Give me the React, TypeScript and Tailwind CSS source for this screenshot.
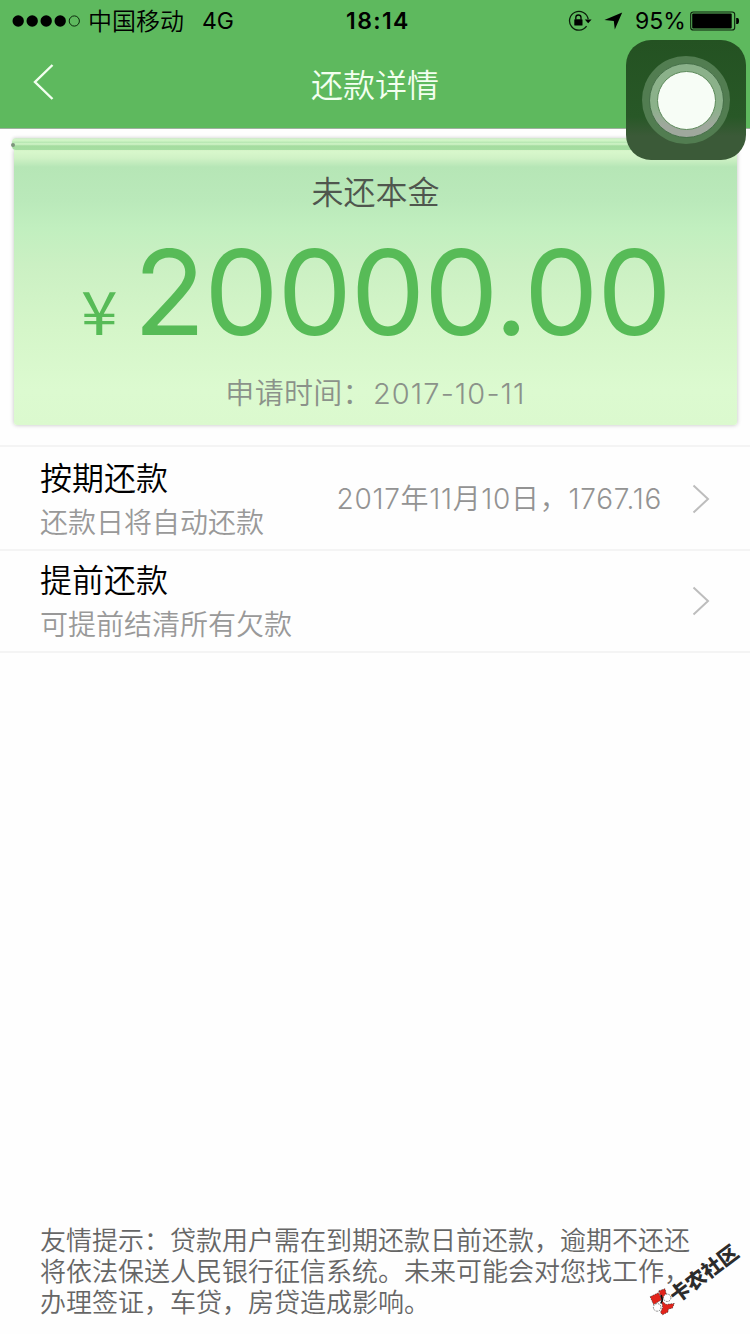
import React from "react";

interface RepayOption {
  title: string;
  hint: string;
  value?: string;
}

const options: RepayOption[] = [
  { title: "按期还款", hint: "还款日将自动还款", value: "2017年11月10日，1767.16" },
  { title: "提前还款", hint: "可提前结清所有欠款" },
];

const notice = [
  "友情提示：贷款用户需在到期还款日前还款，逾期不还还",
  "将依法保送人民银行征信系统。未来可能会对您找工作，",
  "办理签证，车贷，房贷造成影响。",
];

function SignalDots() {
  return (
    <svg width="70" height="14" viewBox="0 0 70 14" className="shrink-0">
      {[6.2, 20.2, 34.2, 48.2].map((x) => (
        <circle key={x} cx={x} cy="7" r="5.7" fill="#000" />
      ))}
      <circle cx="62.3" cy="7" r="5.1" fill="none" stroke="#0b2a0b" strokeWidth="1" />
    </svg>
  );
}

function RotationLock() {
  return (
    <svg width="24" height="22" viewBox="0 0 24 22" className="shrink-0">
      <path d="M18.6 16.2A9.4 9.4 0 1 1 20.2 9.2" fill="none" stroke="#0a1f0a" strokeWidth="1.3" />
      <path d="M16.8 9.4h6.8l-3.4 3.8z" fill="#000" />
      <rect x="6.3" y="9.3" width="8.2" height="6.2" rx="0.6" fill="#000" />
      <path d="M7.8 9.5V7.6a2.6 2.6 0 0 1 5.2 0v1.9" fill="none" stroke="#000" strokeWidth="1.3" />
    </svg>
  );
}

function LocationArrow() {
  return (
    <svg width="19" height="19" viewBox="0 0 19 19" className="shrink-0">
      <path d="M18.2 0.4L10.8 17.6L9.8 8.9L0.4 7.9z" fill="#000" />
    </svg>
  );
}

function Battery() {
  return (
    <svg width="50" height="20" viewBox="0 0 50 20" className="shrink-0">
      <rect x="0.7" y="1" width="44" height="18" rx="2.6" fill="none" stroke="#0b1f0b" strokeWidth="1.1" />
      <rect x="2.2" y="2.6" width="39.5" height="14.8" rx="1" fill="#000" />
      <path d="M46.2 7h1.2q1.6 0 1.6 3t-1.6 3h-1.2z" fill="#000" />
    </svg>
  );
}

function StatusBar() {
  return (
    <div className="flex h-10 items-center pt-px text-black">
      <div className="flex w-[346px] items-center pl-3">
        <SignalDots />
        <span className="mt-[2px] ml-[6px] text-[24px] leading-10 font-[350]">中国移动</span>
        <span className="ml-[18px] text-[23px] leading-10">4G</span>
      </div>
      <span className="w-[222px] text-[23px] leading-10 font-semibold tracking-[1.4px]">18:14</span>
      <RotationLock />
      <span className="mt-px ml-3 flex">
        <LocationArrow />
      </span>
      <span className="ml-3 w-[55px] text-[23px] leading-10">95%</span>
      <Battery />
    </div>
  );
}

function AssistiveTouch() {
  return (
    <div className="absolute top-10 left-[626px] z-10 flex size-[120px] items-center justify-center rounded-[25px] bg-[linear-gradient(180deg,#245222_0%,#285827_64%,#3b5a38_80%,#3b5a38_100%)]">
      <div className="flex size-[88px] items-center justify-center rounded-full bg-[#527d51]">
        <div className="flex size-[75px] items-center justify-center rounded-full border border-[#47704a] bg-[linear-gradient(180deg,#8bb18a_60%,#9fa89d_85%)]">
          <div className="size-[59px] rounded-full border border-[#5d8a5b] bg-[#f7fdf6]" />
        </div>
      </div>
    </div>
  );
}

function AmountCard() {
  return (
    <section className="mx-3 mt-[9px] flex h-[287px] flex-col">
      {/* slot that the receipt slides out of */}
      <div className="relative h-[12px] shrink-0 rounded-l-[4px] bg-[linear-gradient(180deg,#cfe8cb_0%,#d3f7c8_18%,#b8e8b3_38%,#d3f5c9_50%,#a4dc9f_66%,#a6dea2_100%)] shadow-[0_-1px_3px_rgba(0,0,0,0.12)]">
        <span className="absolute top-[5px] -left-px h-[4px] w-[4px] rounded-full bg-[#7d947c]" />
      </div>
      <div className="mr-px ml-[2px] flex flex-1 flex-col items-center rounded-b-[3px] bg-[linear-gradient(180deg,#daf9cd_0px,#d0f2c6_8px,#b6e6b6_17px,#bae9ba_50px,#c1efbf_78px,#cbf0c3_115px,#d5f6c9_180px,#dcfad0_240px,#dbf9ce_276px)] shadow-[0_0_4px_rgba(0,0,0,0.25)]">
        <h2 className="mt-[20px] text-[32px] leading-[46px] font-[350] text-[#4f564e]">未还本金</h2>
        <div className="mt-[11px] flex h-[130px] w-[590px] items-baseline text-[#57bb57]">
          <span className="w-[53px] shrink-0 origin-left scale-x-110 font-['Noto_Sans_CJK_SC',sans-serif] text-[60px] leading-none">
            ¥
          </span>
          <span className="text-[118px] leading-[130px] tracking-[-1.2px]">20000.00</span>
        </div>
        <p className="mt-[17px] flex text-[29px] leading-[40px] font-[350] text-[#8b928a]">
          <span className="mr-px tracking-[0.3px]">申请时间：</span>
          <span className="tracking-[1.1px]">2017-10-11</span>
        </p>
      </div>
    </section>
  );
}

function Chevron() {
  return (
    <svg width="18" height="30" viewBox="0 0 18 30" className="shrink-0">
      <path d="M1.5 1.5L16 15L1.5 28.5" fill="none" stroke="#bdbdbd" strokeWidth="2" />
    </svg>
  );
}

function OptionRow({ title, hint, value }: RepayOption) {
  return (
    <li className="flex h-[102px] items-center border-b-2 border-[#f4f4f4] px-10 first:h-[104px] first:pt-[2px]">
      <div className="flex-1">
        <div className="text-[32px] leading-[48px] font-[350] text-black">{title}</div>
        <div className="text-[28px] leading-[40px] font-[350] text-[#999]">{hint}</div>
      </div>
      {value && <div className="mr-[30px] text-[28px] font-[350] tracking-[0.7px] text-[#939393]">{value}</div>}
      <Chevron />
    </li>
  );
}

function CornerMark() {
  return (
    <div className="absolute top-[1242px] left-[649px] h-[76px] w-[100px]">
      <svg width="28" height="30" viewBox="0 0 28 30" className="absolute top-[45px] left-0">
        <g stroke="#222" strokeWidth="0.6" strokeDasharray="1.6 1" strokeLinejoin="round">
          <path d="M1.2 9.8L9.4 5.8L13 12.5L4.6 17.6z" fill="#e2231a" />
          <path d="M9.8 3.9L16 1.8L17.3 7.5L12.8 12z" fill="#e2231a" />
          <path d="M12.6 13.6L17 17.5L25.3 16.5L23.3 21.2L19.3 21.9L19 25L13.5 27.8L11.5 25.4L13.7 20.5z" fill="#e2231a" />
          <circle cx="18.2" cy="10.8" r="3.7" fill="#fff" />
          <circle cx="8.2" cy="20.4" r="3.8" fill="#fff" />
        </g>
        <path d="M12.2 8l1.2 5 -1.6 3.5" fill="none" stroke="#111" strokeWidth="1.6" />
      </svg>
      <span className="absolute top-[22px] left-[15px] -rotate-[37deg] text-[20px] leading-none font-black whitespace-nowrap text-[#2c2c2c]">
        卡农社区
      </span>
    </div>
  );
}

export default function App() {
  return (
    <div
      lang="zh-CN"
      className="relative flex h-[1334px] w-[750px] flex-col overflow-hidden bg-[#fefefe] font-['Inter','Noto_Sans_CJK_SC',sans-serif]"
    >
      <header className="h-[129px] shrink-0 border-b border-[#9fb09f] bg-[#5eb95e]">
        <StatusBar />
        <div className="flex h-[88px] items-center pl-8">
          <svg width="24" height="40" viewBox="0 0 24 40" className="mb-1 shrink-0">
            <path d="M20.5 3L3 20L20.5 37" fill="none" stroke="#f3fff0" strokeWidth="2.4" />
          </svg>
          <h1 className="mt-1 ml-[255px] text-[32px] leading-[48px] font-[350] text-[#f3fff0]">还款详情</h1>
        </div>
      </header>

      <AssistiveTouch />
      <AmountCard />

      <ul className="mt-[20px] border-t-2 border-[#f4f4f4]">
        {options.map((o) => (
          <OptionRow key={o.title} {...o} />
        ))}
      </ul>

      <footer className="mt-auto mb-[16px] pl-10 text-[26px] leading-[31px] font-[350] text-[#666]">
        {notice.map((line) => (
          <p key={line} className="whitespace-nowrap">{line}</p>
        ))}
      </footer>
      <CornerMark />
    </div>
  );
}
